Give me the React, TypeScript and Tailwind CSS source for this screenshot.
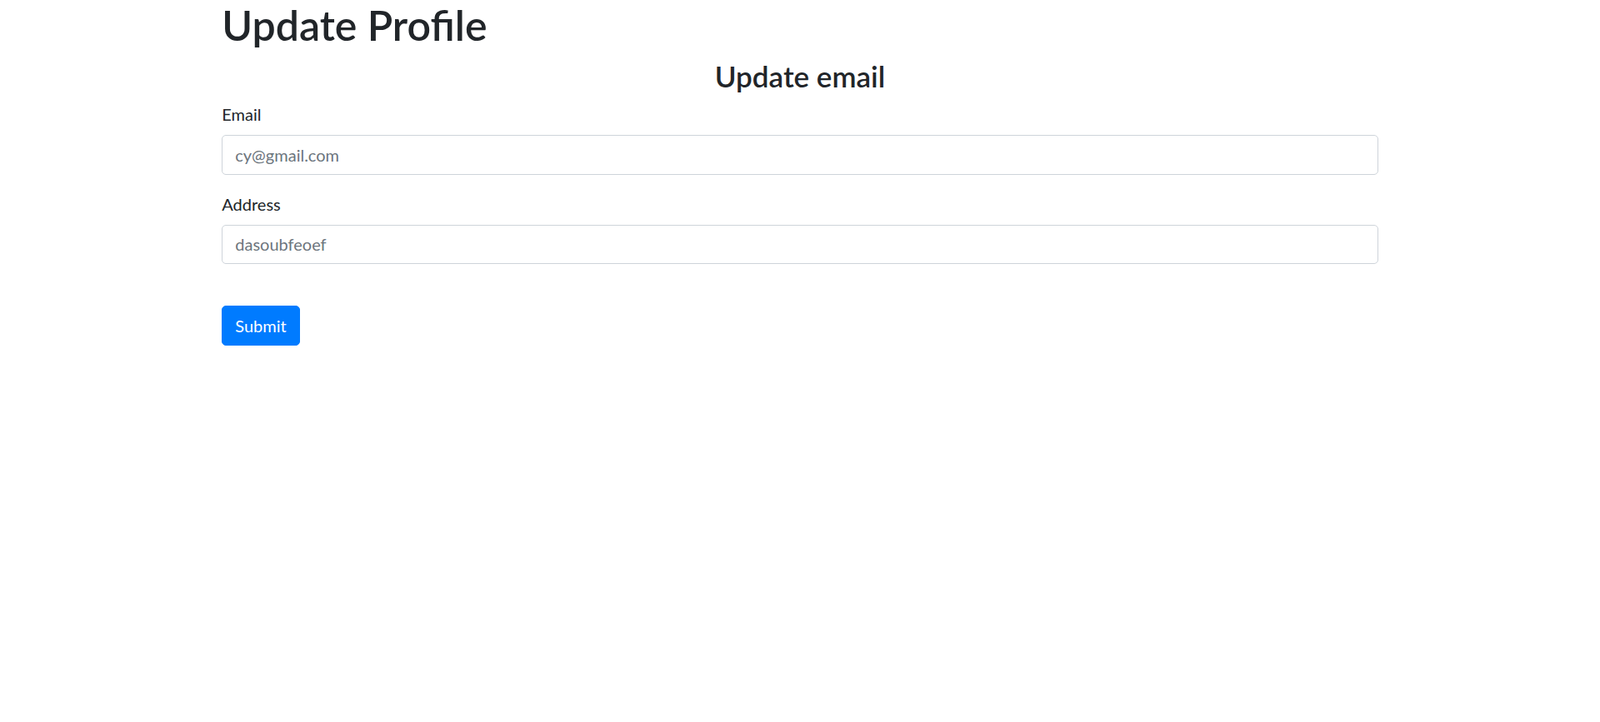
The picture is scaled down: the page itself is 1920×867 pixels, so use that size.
export default function App() {
  const font = { fontFamily: '"Lato", "Noto Sans", sans-serif' };
  return (
    <div className="min-h-[867px] bg-white text-[#212529]" style={font}>
      <div className="mx-auto w-[1425px] px-[18.75px]">
        <h1 className="m-0 mb-[10px] text-[50px] font-semibold leading-[1.2]">Update Profile</h1>
        <h3 className="m-0 mb-[10px] text-center text-[35px] font-semibold leading-[1.2]">Update email</h3>
        <form onSubmit={(e) => e.preventDefault()}>
          <div className="mb-[20px]">
            <label className="mb-[10px] block text-[20px] leading-[30px]">Email</label>
            <input
              type="email"
              placeholder="cy@gmail.com"
              className="block h-[47.5px] w-full rounded-[5px] border-[1.25px] border-[#ced4da] bg-white px-[15px] py-[7.5px] text-[20px] leading-[30px] text-[#495057] outline-none placeholder:text-[#6c757d]"
            />
          </div>
          <div className="mb-[20px]">
            <label className="mb-[10px] block text-[20px] leading-[30px]">Address</label>
            <input
              type="text"
              placeholder="dasoubfeoef"
              className="block h-[47.5px] w-full rounded-[5px] border-[1.25px] border-[#ced4da] bg-white px-[15px] py-[7.5px] text-[20px] leading-[30px] text-[#495057] outline-none placeholder:text-[#6c757d]"
            />
          </div>
          <div className="h-[30px]" />
          <button
            type="submit"
            className="h-[47.5px] rounded-[5px] border-[1.25px] border-[#007bff] bg-[#007bff] px-[15px] text-[20px] leading-[30px] text-white"
          >
            Submit
          </button>
        </form>
      </div>
    </div>
  );
}
